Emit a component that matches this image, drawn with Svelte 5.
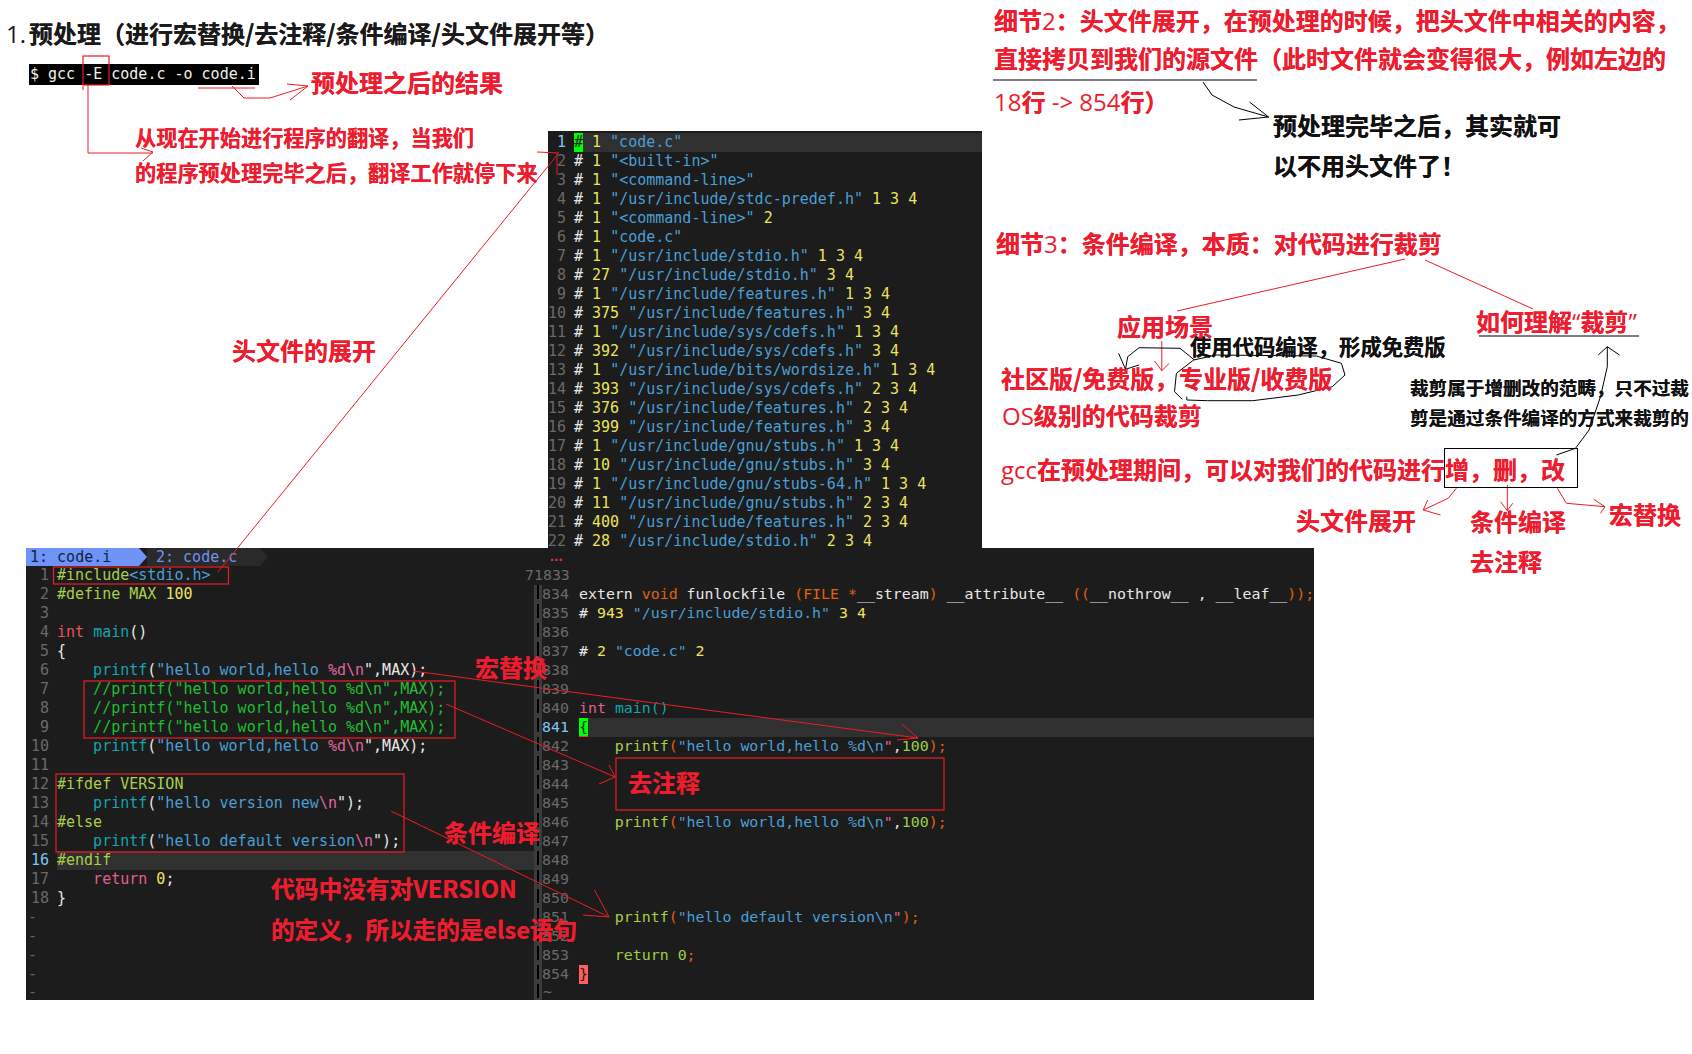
<script lang="ts">
  // tokens: "class:text" joined with a tab, no class means the plain colour
  const row = (s: string) =>
    s.split('\t').filter(Boolean).map((t) => {
      const i = t.indexOf(':');
      return { c: t.slice(0, i), t: t.slice(i + 1) };
    });

  const headerLines = [
    ['1 ', '"code.c"', ''],
    ['1 ', '"<built-in>"', ''],
    ['1 ', '"<command-line>"', ''],
    ['1 ', '"/usr/include/stdc-predef.h"', ' 1 3 4'],
    ['1 ', '"<command-line>"', ' 2'],
    ['1 ', '"code.c"', ''],
    ['1 ', '"/usr/include/stdio.h"', ' 1 3 4'],
    ['27 ', '"/usr/include/stdio.h"', ' 3 4'],
    ['1 ', '"/usr/include/features.h"', ' 1 3 4'],
    ['375 ', '"/usr/include/features.h"', ' 3 4'],
    ['1 ', '"/usr/include/sys/cdefs.h"', ' 1 3 4'],
    ['392 ', '"/usr/include/sys/cdefs.h"', ' 3 4'],
    ['1 ', '"/usr/include/bits/wordsize.h"', ' 1 3 4'],
    ['393 ', '"/usr/include/sys/cdefs.h"', ' 2 3 4'],
    ['376 ', '"/usr/include/features.h"', ' 2 3 4'],
    ['399 ', '"/usr/include/features.h"', ' 3 4'],
    ['1 ', '"/usr/include/gnu/stubs.h"', ' 1 3 4'],
    ['10 ', '"/usr/include/gnu/stubs.h"', ' 3 4'],
    ['1 ', '"/usr/include/gnu/stubs-64.h"', ' 1 3 4'],
    ['11 ', '"/usr/include/gnu/stubs.h"', ' 2 3 4'],
    ['400 ', '"/usr/include/features.h"', ' 2 3 4'],
    ['28 ', '"/usr/include/stdio.h"', ' 2 3 4']
  ];

  const hello = 'tl:    printf\t:(\tb:"hello world,hello \tp:%d\\n\t:",MAX);';
  const comment = 'g:    //printf("hello world,hello %d\\n",MAX);';
  const source = [
    'o:#include\tb:<stdio.h>',
    'o:#define MAX \ty:100',
    '',
    'r:int \ttl:main\t:()',
    ':{',
    hello,
    comment,
    comment,
    comment,
    hello,
    '',
    'o:#ifdef VERSION',
    'tl:    printf\t:(\tb:"hello version new\tp:\\n\t:");',
    'o:#else',
    'tl:    printf\t:(\tb:"hello default version\tp:\\n\t:");',
    'o:#endif',
    'r2:    return \ty:0\t:;',
    ':}'
  ].map(row);

  const hello2 = 'o:    printf\tq:(\tb:"hello world,hello %d\\n\tp:"\t:,\tl:100\tq:);';
  const expanded = [
    'u:',
    ':extern \tq:void \t:funlockfile \tq:(FILE *\t:__stream\tq:) \t:__attribute__ \tq:((\t:__nothrow__ , __leaf__\tq:));',
    ':# \ty:943 \tb:"/usr/include/stdio.h"\ty: 3 4',
    '',
    ':# \ty:2 \tb:"code.c"\ty: 2',
    '',
    '',
    'r2:int \ttl:main()',
    '',
    hello2,
    '',
    '',
    '',
    hello2,
    '',
    '',
    '',
    '',
    'o:    printf\tq:(\tb:"hello default version\\n\tp:"\tq:);',
    '',
    'l:    return \tl:0\tq:;',
    ''
  ].map(row);
  const expandedNumbers = ['71833', ...Array.from({ length: 21 }, (_, i) => String(834 + i))];

  // | toggles the thin latin face used inside the bold notes
  const notes = [
    { t: '预处理之后的结果', x: 311, y: 84, s: 24 },
    { t: '从现在开始进行程序的翻译，当我们', x: 135, y: 138, s: 21.2 },
    { t: '的程序预处理完毕之后，翻译工作就停下来', x: 135, y: 173, s: 21.2 },
    { t: '头文件的展开', x: 232, y: 352, s: 24 },
    { t: '细节|2|：头文件展开，在预处理的时候，把头文件中相关的内容，', x: 994, y: 22, s: 24 },
    { t: '直接拷贝到我们的源文件（此时文件就会变得很大，例如左边的', x: 994, y: 60, s: 24 },
    { t: '|18|行| -> 854|行）', x: 994, y: 103, s: 24 },
    { t: '预处理完毕之后，其实就可', x: 1273, y: 127, s: 24, k: true },
    { t: '以不用头文件了！', x: 1273, y: 167, s: 24, k: true },
    { t: '细节|3|：条件编译，本质：对代码进行裁剪', x: 996, y: 244.5, s: 24 },
    { t: '应用场景', x: 1117, y: 328, s: 24 },
    { t: '如何理解|“|裁剪|”', x: 1476, y: 323, s: 24 },
    { t: '使用代码编译，形成免费版', x: 1190, y: 347, s: 21.3, k: true },
    { t: '社区版/免费版，', x: 1001, y: 380, s: 24 },
    { t: '专业版/收费版', x: 1179, y: 380, s: 24 },
    { t: '|OS|级别的代码裁剪', x: 1002, y: 417, s: 24 },
    { t: '裁剪属于增删改的范畴，只不过裁', x: 1410, y: 389, s: 18.6, k: true },
    { t: '剪是通过条件编译的方式来裁剪的', x: 1410, y: 419, s: 18.6, k: true },
    { t: '|gcc|在预处理期间，可以对我们的代码进行增，删，改', x: 1001, y: 471, s: 24 },
    { t: '头文件展开', x: 1296, y: 522, s: 24 },
    { t: '条件编译', x: 1470, y: 523, s: 24 },
    { t: '去注释', x: 1470, y: 563, s: 24 },
    { t: '宏替换', x: 1609, y: 516, s: 24 },
    { t: '宏替换', x: 475, y: 669, s: 24 },
    { t: '去注释', x: 628, y: 784, s: 24 },
    { t: '条件编译', x: 444, y: 834, s: 24 },
    { t: '代码中没有对VERSION', x: 271, y: 890, s: 23.7 },
    { t: '的定义，所以走的是else语句', x: 271, y: 931, s: 23.6 }
  ];

  // zoom-4 sketch coordinates, mapped back onto the page
  const z4 = (pts: number[][]) =>
    pts.map(([x, y]) => `${(980 + x / 2.2).toFixed(1)},${(280 + y / 3).toFixed(1)}`).join(' ');

  const redLines = [
    '88,85 88,153 153,153',
    '143,161 153,152 141,148',
    '83,86 83,90',
    '198,88 255,88',
    '232,86 244,98 270,98 308,86',
    '287,84 308,86 290,100',
    '537,152 559,153',
    '557,153 557,175',
    '218,572 558,154',
    '1405,259 1177,311',
    '1425,260 1533,309',
    '413,671 918,738',
    '902,724 918,738 897,740',
    '446,704 615,777',
    '609,765 615,777 599,784',
    '391,811 609,917',
    '594.5,890 609,917 583,915',
    z4([[400, 183], [400, 272]]),
    z4([[384, 243], [400, 272], [416, 250]]),
    z4([[1048, 625], [1030, 655], [975, 690]]),
    z4([[985, 660], [975, 690], [1013, 705]]),
    z4([[1160, 615], [1160, 690]]),
    z4([[1145, 665], [1160, 692], [1172, 670]]),
    z4([[1270, 625], [1290, 670], [1375, 680]]),
    z4([[1350, 658], [1375, 680], [1365, 700]])
  ];

  const blackLines = [
    '1203,82 1212,95 1234,107 1268.6,117',
    '1249.5,102 1268.6,117 1239,120',
    z4([[445, 358], [428, 335], [432, 280], [470, 240], [520, 225], [740, 228], [795, 250], [803, 285], [775, 320], [700, 345], [600, 362], [500, 362], [455, 360], [455, 350]]),
    z4([[472, 240], [440, 205], [350, 203], [325, 230], [320, 268]]),
    z4([[305, 220], [320, 268], [350, 255]]),
    z4([[1268, 525], [1310, 505], [1340, 450], [1365, 350], [1380, 260], [1380, 200]]),
    z4([[1360, 225], [1380, 200], [1407, 225]])
  ];

  const redBoxes = [
    [83, 56, 26, 29],
    [53.5, 567, 175, 17],
    [84, 681, 371, 57],
    [56, 774, 348, 78],
    [616, 758, 328, 52]
  ];
</script>

<div class="page">
  <h1 class="title"><span class="num">1.</span>预处理（进行宏替换/去注释/条件编译/头文件展开等）</h1>

  <div class="shell">$ gcc -E code.c -o code.i</div>

  <div class="vim header-view">
    {#each headerLines as l, i}
      <div class="line" class:current={i === 0}>
        <span class="nr" class:nr-on={i === 0}>{i + 1}</span>
        <span class="code"><span class={i === 0 ? 'cursor' : 'w'}>#</span><span class="y">{' ' + l[0]}</span><span class="b">{l[1]}</span><span class="y">{l[2]}</span></span>
      </div>
    {/each}
  </div>

  <div class="vim split">
    <div class="tabs">
      <span class="tab tab-on">1: code.i</span>
      <span class="tab">2: code.c</span>
    </div>
    <span class="more">...</span>
    <div class="panes">
      <div class="pane left">
        {#each source as tokens, i}
          <div class="line" class:current={i === 15}>
            <span class="nr" class:nr-on={i === 15}>{i + 1}</span>
            <span class="code">{#each tokens as tk}<span class={tk.c}>{tk.t}</span>{/each}</span>
          </div>
        {/each}
        {#each Array(5) as _, i}
          <div class="line" class:last-line={i === 4}><span class="tilde">-</span></div>
        {/each}
      </div>
      <div class="divider"></div>
      <div class="pane right">
        {#each expanded as tokens, i}
          <div class="line" class:current={i === 8}>
            <span class="nr" class:nr-on={i === 8}>{expandedNumbers[i]}</span>
            <span class="code">{#if i === 8}<span class="cursor brace">{'{'}</span>{:else if i === 21}<span class="match">{'}'}</span>{:else}{#each tokens as tk}<span class={tk.c}>{tk.t}</span>{/each}{/if}</span>
          </div>
        {/each}
        <div class="line last-line"><span class="nr tilde-r">~</span></div>
      </div>
    </div>
  </div>

  <svg class="ink" width="1692" height="1054" viewBox="0 0 1692 1054">
    {#each redLines as p}
      <polyline points={p} fill="none" stroke="#ed1c24" stroke-width="1" />
    {/each}
    {#each blackLines as p}
      <polyline points={p} fill="none" stroke="#000" stroke-width="1" />
    {/each}
    {#each redBoxes as b}
      <rect x={b[0]} y={b[1]} width={b[2]} height={b[3]} fill="none" stroke="#ed1c24" stroke-width="1.2" />
    {/each}
    <rect x="1444.5" y="448.5" width="133" height="39" fill="none" stroke="#000" />
    <line x1="993" y1="80" x2="1257" y2="80" stroke="#000" stroke-width="1.2" />
    <line x1="1479" y1="336" x2="1639" y2="336" stroke="#000" stroke-width="1.2" />
  </svg>

  {#each notes as n}
    <span class="note" class:dark={n.k} style="left:{n.x}px;top:{n.y}px;font-size:{n.s}px">
      {#each n.t.split('|') as part, i}<span class:thin={i % 2 === 1}>{part}</span>{/each}
    </span>
  {/each}
</div>

<style>
  :global(body) {
    background: #fff;
  }

  .page {
    position: relative;
    width: 1692px;
    height: 1054px;
    overflow: hidden;
    font-family: "Noto Sans CJK SC", "Noto Sans", sans-serif;
  }

  .title {
    position: absolute;
    left: 6px;
    top: 16px;
    margin: 0;
    font-size: 24px;
    line-height: 34px;
    font-weight: 700;
    color: #1a1a1a;
    white-space: nowrap;
    text-shadow: 0 0 0.6px currentColor;
  }

  .title .num {
    margin-right: 3px;
    font-family: "Open Sans", sans-serif;
    font-weight: 400;
    text-shadow: none;
  }

  .shell {
    position: absolute;
    left: 29px;
    top: 64px;
    width: 230px;
    height: 21px;
    padding-left: 1px;
    box-sizing: border-box;
    background: #000;
    color: #f2f2e6;
    font: 15px/21px "DejaVu Sans Mono", monospace;
    white-space: pre;
  }

  .vim {
    position: absolute;
    background: #1c1c1c;
    color: #e8e8e8;
    font: 15px/19px "DejaVu Sans Mono", monospace;
    overflow: hidden;
  }

  .header-view {
    left: 548px;
    top: 131px;
    width: 434px;
    height: 417px;
    padding-top: 1.5px;
    box-sizing: border-box;
  }

  .split {
    left: 26px;
    top: 548px;
    width: 1288px;
    height: 452px;
  }

  .line {
    display: flex;
    height: 19px;
  }

  .last-line {
    height: 16px;
    line-height: 16px;
  }

  .nr {
    flex: none;
    color: #6a6a6a;
    text-align: right;
  }

  .nr-on {
    color: #7cc8f5;
  }

  .code {
    flex: 1;
    min-width: 0;
    white-space: pre;
  }

  .current .code {
    background: #303030;
  }

  .header-view .nr {
    width: 18px;
  }

  .header-view .code {
    margin-left: 8px;
  }

  .tabs {
    display: flex;
    height: 18px;
  }

  .tab {
    position: relative;
    width: 113px;
    padding-left: 4px;
    box-sizing: border-box;
    background: #2a2a2a;
    color: #6f94f2;
    line-height: 18px;
    white-space: pre;
  }

  .tab + .tab {
    margin-left: 8px;
    padding-left: 9px;
  }

  .tab::after {
    content: "";
    position: absolute;
    left: 100%;
    top: 0;
    border-left: 8px solid #2a2a2a;
    border-top: 9px solid transparent;
    border-bottom: 9px solid transparent;
  }

  .tab-on {
    background: #6f94f8;
    color: #14213d;
  }

  .tab-on::after {
    border-left-color: #6f94f8;
  }

  .more {
    position: absolute;
    left: 522px;
    top: 0;
    color: #e0303a;
    font-weight: 700;
    font-size: 13px;
    letter-spacing: -3.5px;
    line-height: 18px;
  }

  .panes {
    display: flex;
  }

  .pane {
    min-width: 0;
    overflow: hidden;
  }

  .left {
    flex: none;
    width: 508px;
  }

  .left .nr {
    width: 23px;
  }

  .left .code {
    margin-left: 8px;
  }

  .tilde {
    padding-left: 2px;
    color: #666;
  }

  .divider {
    flex: none;
    width: 8px;
    height: 415px;
    margin-top: 19px;
    background: repeating-linear-gradient(#000 0 14px, #3c3c3c 14px 19px) 3px 0 / 2px 100% no-repeat #3c3c3c;
  }

  .right {
    flex: 1;
    margin-left: -17px;
    font-size: 14.9px;
  }

  .right .line:first-child .nr {
    position: relative;
    z-index: 1;
  }

  .right .nr {
    width: 44px;
  }

  .right .code {
    margin-left: 10px;
  }

  .right .tilde-r {
    text-align: left;
    padding-left: 18px;
    width: auto;
  }

  .cursor {
    display: inline-block;
    width: 9px;
    background: #00ff00;
    color: #1c1c1c;
  }

  .brace {
    box-shadow: inset 0 -1px #e33;
  }

  .match {
    display: inline-block;
    width: 9px;
    background: #ff5f5f;
    color: #1c1c1c;
  }

  .w { color: #e8e8e8; }
  .y { color: #eee35c; }
  .b { color: #4a9fd6; }
  .g { color: #1fbf30; }
  .o { color: #a9cf4b; }
  .r { color: #e8505f; }
  .r2 { color: #e0608f; }
  .p { color: #e0659f; }
  .tl { color: #12a5ad; }
  .q { color: #e2600f; }
  .l { color: #9ccf45; }

  .ink {
    position: absolute;
    left: 0;
    top: 0;
    pointer-events: none;
  }

  .note {
    position: absolute;
    transform: translateY(calc(-50% - 1.5px));
    font-weight: 700;
    line-height: 1.2;
    color: #ed1c2e;
    white-space: nowrap;
    text-shadow: 0 0 0.6px currentColor;
  }

  .dark {
    color: #111;
  }

  .thin {
    font-family: "Open Sans", sans-serif;
    font-weight: 400;
    text-shadow: none;
  }
</style>
